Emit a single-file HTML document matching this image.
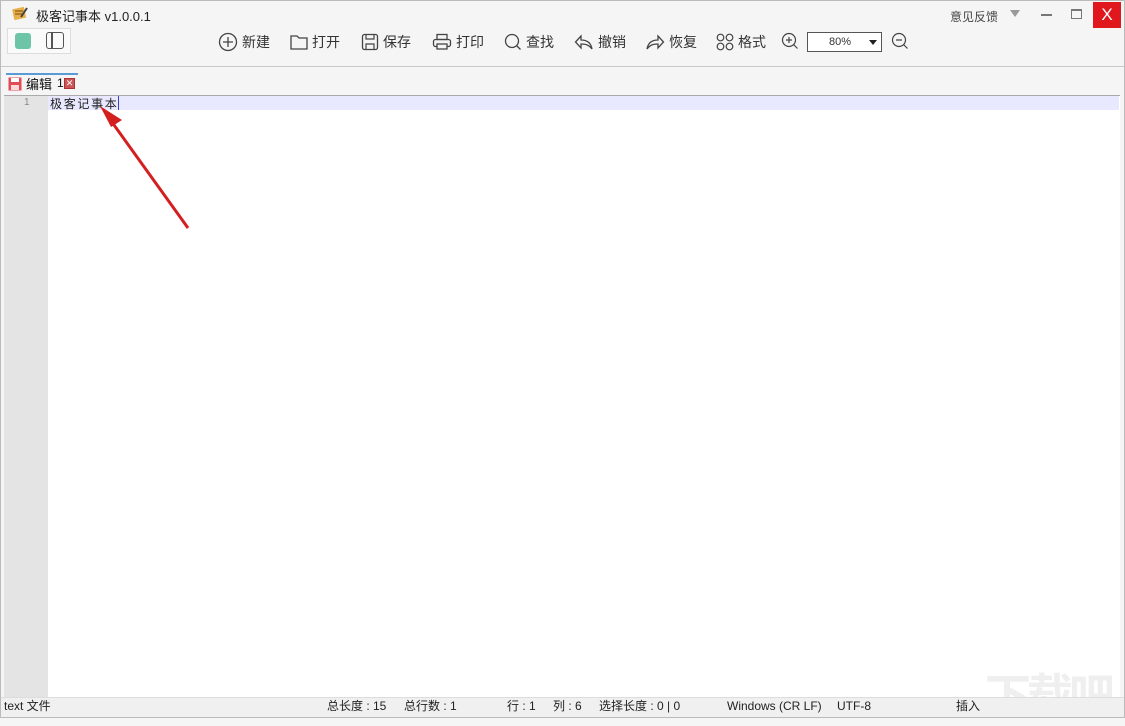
<!DOCTYPE html>
<html><head><meta charset="utf-8"><style>
*{margin:0;padding:0;box-sizing:border-box}
body{width:1125px;height:718px;overflow:hidden;background:#f5f5f5;font-family:"Liberation Sans","Noto Sans CJK SC",sans-serif;position:relative;font-size:14px;color:#333}
.abs{position:absolute}
.tb{position:absolute;top:31px;display:flex;align-items:center;gap:4px;font-size:14px;color:#333;height:22px}
.st{position:absolute;top:698px;font-size:12px;color:#222;line-height:16px;white-space:nowrap}
</style></head><body>
<div class="abs" style="left:0;top:0;width:1125px;height:718px;border:1px solid #bbb"></div>
<svg class="abs" style="left:11px;top:5px" width="18" height="16"><rect x="2" y="3" width="12" height="11" fill="#e8b04a" transform="rotate(-12 8 8)"/><path d="M4 6h8M4 9h8" stroke="#7a4a10"/><path d="M10 12l6-9" stroke="#444" stroke-width="2"/></svg>
<div class="abs" style="left:36px;top:6px;font-size:13px;color:#222">极客记事本 v1.0.0.1</div>
<div class="abs" style="left:950px;top:8px;font-size:12px;color:#444">意见反馈</div>
<div class="abs" style="left:1010px;top:10px;width:0;height:0;border-left:5px solid transparent;border-right:5px solid transparent;border-top:7px solid #999"></div>
<div class="abs" style="left:1041px;top:14px;width:11px;height:2px;background:#777"></div>
<div class="abs" style="left:1071px;top:9px;width:11px;height:10px;border:1px solid #777;border-top-width:2px"></div>
<div class="abs" style="left:1093px;top:2px;width:28px;height:26px;background:#e0181e;color:#fff;font-size:17px;text-align:center;line-height:26px">X</div>
<div class="abs" style="left:7px;top:28px;width:64px;height:26px;border:1px solid #ddd;background:#fafafa"></div>
<div class="abs" style="left:15px;top:33px;width:16px;height:16px;background:#6dc4a6;border-radius:3px"></div>
<div class="abs" style="left:46px;top:32px;width:18px;height:17px;border:1.5px solid #555;border-radius:3px"></div>
<div class="abs" style="left:51px;top:33px;width:1.5px;height:15px;background:#555"></div>
<div class="tb" style="left:218px"><svg width="20" height="20"><circle cx="10" cy="10" r="8.5" fill="none" stroke="#444" stroke-width="1.3"/><path d="M10 5v10M5 10h10" stroke="#444" stroke-width="1.3"/></svg>新建</div>
<div class="tb" style="left:290px"><svg width="18" height="18"><path d="M1 3h6l2 2h8v11H1z" fill="none" stroke="#444" stroke-width="1.3"/></svg>打开</div>
<div class="tb" style="left:361px"><svg width="18" height="18"><rect x="1.5" y="1.5" width="15" height="15" rx="2" fill="none" stroke="#444" stroke-width="1.3"/><path d="M5 2v4h8V2M5 16v-5h8v5" fill="none" stroke="#444" stroke-width="1.2"/></svg>保存</div>
<div class="tb" style="left:432px"><svg width="20" height="18"><rect x="5" y="1.5" width="10" height="5" fill="none" stroke="#444" stroke-width="1.3"/><rect x="1.5" y="6.5" width="17" height="7" rx="2" fill="none" stroke="#444" stroke-width="1.3"/><rect x="5" y="11" width="10" height="5" fill="#f5f5f5" stroke="#444" stroke-width="1.3"/></svg>打印</div>
<div class="tb" style="left:504px"><svg width="18" height="18"><circle cx="8" cy="8" r="6.5" fill="none" stroke="#444" stroke-width="1.3"/><path d="M12.5 12.5l4 4" stroke="#444" stroke-width="1.3"/></svg>查找</div>
<div class="tb" style="left:574px"><svg width="20" height="18"><path d="M7 3L1.5 9 7 15V11c5 0 8 1 11 5-1-6-5-9-11-9z" fill="none" stroke="#444" stroke-width="1.3"/></svg>撤销</div>
<div class="tb" style="left:645px"><svg width="20" height="18"><path d="M13 3l5.5 6-5.5 6V11c-5 0-8 1-11 5 1-6 5-9 11-9z" fill="none" stroke="#444" stroke-width="1.3"/></svg>恢复</div>
<div class="tb" style="left:716px"><svg width="18" height="18"><circle cx="4.5" cy="4.5" r="3.3" fill="none" stroke="#444" stroke-width="1.2"/><circle cx="13.5" cy="4.5" r="3.3" fill="none" stroke="#444" stroke-width="1.2"/><circle cx="4.5" cy="13.5" r="3.3" fill="none" stroke="#444" stroke-width="1.2"/><circle cx="13.5" cy="13.5" r="3.3" fill="none" stroke="#444" stroke-width="1.2"/></svg>格式</div>
<svg class="abs" style="left:781px;top:32px" width="18" height="18"><circle cx="8" cy="8" r="6.5" fill="none" stroke="#444" stroke-width="1.2"/><path d="M12.5 12.5l4 4M5 8h6M8 5v6" stroke="#444" stroke-width="1.2"/></svg>
<div class="abs" style="left:807px;top:32px;width:75px;height:20px;border:1px solid #555;background:#fff;font-size:11px;line-height:18px;padding-left:21px">80%</div>
<div class="abs" style="left:869px;top:40px;width:0;height:0;border-left:4px solid transparent;border-right:4px solid transparent;border-top:5px solid #222"></div>
<svg class="abs" style="left:891px;top:32px" width="18" height="18"><circle cx="8" cy="8" r="6.5" fill="none" stroke="#444" stroke-width="1.2"/><path d="M12.5 12.5l4 4M5 8h6" stroke="#444" stroke-width="1.2"/></svg>
<div class="abs" style="left:1px;top:66px;width:1123px;height:1px;background:#c8c8c8"></div>
<div class="abs" style="left:6px;top:73px;width:72px;height:2px;background:#5b9bd5"></div>
<svg class="abs" style="left:8px;top:77px" width="14" height="14"><rect x="0.5" y="0.5" width="13" height="13" fill="#e24a55"/><rect x="3" y="1" width="8" height="4" fill="#fff"/><rect x="3" y="8" width="8" height="5" fill="#fbdada"/></svg>
<div class="abs" style="left:26px;top:74px;font-size:13px;color:#111">编辑</div>
<div class="abs" style="left:57px;top:76px;font-size:12px;color:#111">1</div>
<div class="abs" style="left:64px;top:78px;width:11px;height:11px;background:#c55;border:1px solid #a33;color:#fff;font-size:9px;line-height:9px;text-align:center">✕</div>
<div class="abs" style="left:4px;top:95px;width:1116px;height:603px;background:#fff;border-top:1px solid #aaa"></div>
<div class="abs" style="left:4px;top:96px;width:44px;height:602px;background:#e4e4e4"></div>
<div class="abs" style="left:48px;top:96px;width:1071px;height:14px;background:#e8e8ff"></div>
<div class="abs" style="left:24px;top:97px;font-size:10px;color:#888">1</div>
<div class="abs" style="left:50px;top:95px;font-size:12px;color:#222;letter-spacing:1.7px">极客记事本</div>
<div class="abs" style="left:118px;top:96px;width:1px;height:14px;background:#4040c0"></div>
<svg class="abs" style="left:95px;top:100px" width="100" height="135"><path d="M93 128L14 18" stroke="#d41f1f" stroke-width="3"/><path d="M5 6L27 20 16 27z" fill="#d41f1f"/></svg>
<div class="abs" style="left:985px;top:660px;font-size:46px;color:#efefef;font-weight:bold;letter-spacing:-4px">下载吧</div>
<div class="abs" style="left:1px;top:697px;width:1123px;height:20px;background:#f0f0f0;border-top:1px solid #ddd"></div>
<div class="st" style="left:4px">text 文件</div>
<div class="st" style="left:327px">总长度 : 15</div>
<div class="st" style="left:404px">总行数 : 1</div>
<div class="st" style="left:507px">行 : 1</div>
<div class="st" style="left:553px">列 : 6</div>
<div class="st" style="left:599px">选择长度 : 0 | 0</div>
<div class="st" style="left:727px">Windows (CR LF)</div>
<div class="st" style="left:837px">UTF-8</div>
<div class="st" style="left:956px">插入</div>
</body></html>
